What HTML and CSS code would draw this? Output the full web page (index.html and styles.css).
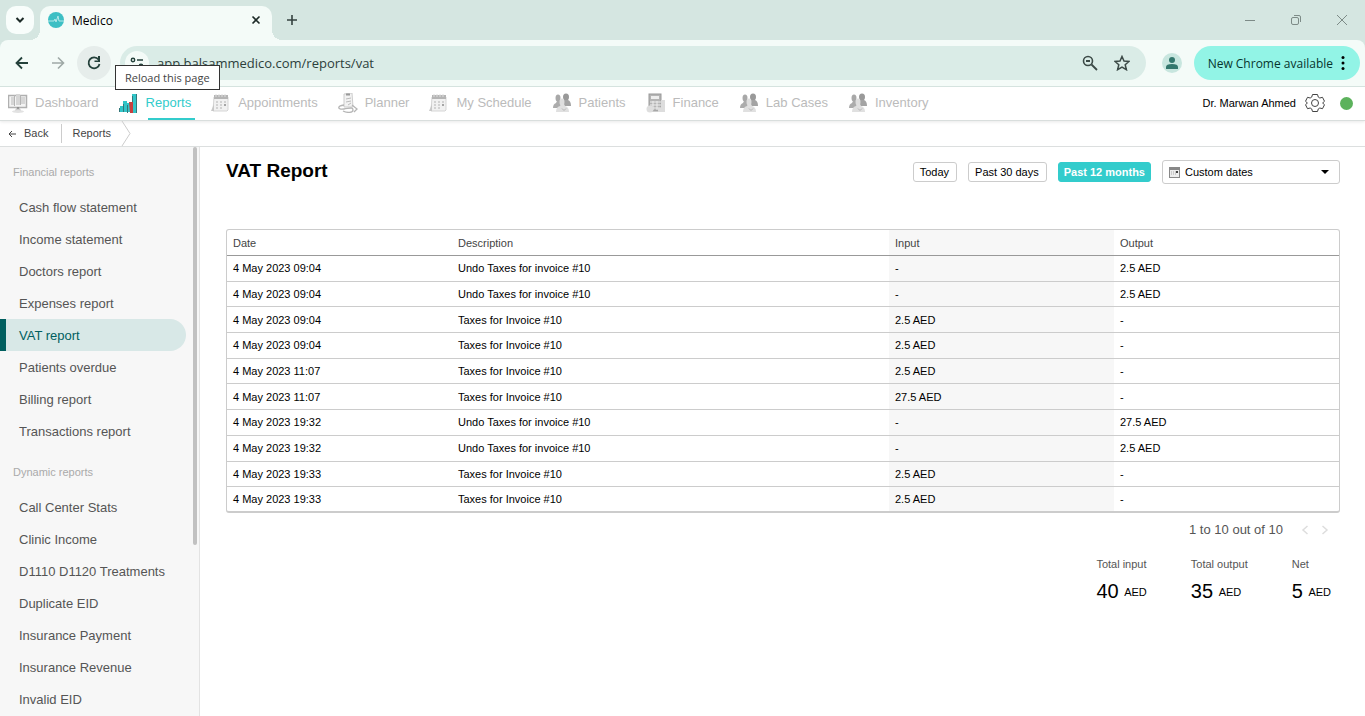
FILE: index.html
```html
<!doctype html>
<html lang="en">
<head>
    <meta charset="UTF-8">
    <title>Medico</title>
    <link rel="stylesheet" href="styles.css">
</head>

<body>
<svg class="defs" width="0" height="0">
    <symbol id="people" viewBox="0 0 20 20">
        <ellipse cx="6" cy="5" rx="2.500" ry="3.500" fill="#a8a8a8"/>
        <ellipse cx="14" cy="4" rx="3" ry="3.500" fill="#999"/>
        <path d="M1 15q0-4 3-5l1-2h3l3 7z" fill="#acacac"/>
        <path d="M9 13l3-6h4q3 1 3 6z" fill="#a4a4a4"/>
        <ellipse cx="10" cy="9" rx="2.500" ry="3.500" fill="#dedede"/>
        <path d="M4 19q0-5 4-6l1-2h3l1 2q4 1 4 6z" fill="#e0e0e0"/>
        <path d="M10 15.500l2 2 2-2" fill="none" stroke="#b5b5b5"/>
    </symbol>
    <symbol id="calendar" viewBox="0 0 20 20">
        <path d="M3 4h14v13l-1 1H2z" fill="#f1f1f1" stroke="#d5d5d5"/>
        <path d="M3 2h14v4H3z" fill="#b5b5b5"/>
        <path d="M5 1v3M8 1v3M11 1v3M14 1v3" stroke="#dedede"/>
        <path d="M5 9h2M9 9h2M13 9h2M5 12h2M9 12h2M5 15h2M9 15h2" stroke="#d2d2d2" stroke-width="2"/>
        <path d="M13 11h2v2h-2z" fill="#a5a5a5"/>
        <path d="M0 18l3-7v7z" fill="#c8c8c8"/>
    </symbol>
</svg>

<div class="tabs">
    <button class="search" aria-label="Search tabs"><svg width="10" height="10" viewBox="0 0 10 10"><path d="M1.500 3L5 6.500 8.500 3" fill="none" stroke="#1d2b28" stroke-width="2"/></svg></button>
    <div class="tab">
        <svg class="favicon" width="16" height="16" viewBox="0 0 16 16"><circle cx="8" cy="8" r="8" fill="#3dbfc4"/><path d="M0 9h6l1-2 1 3 2-6 1 5h5" fill="none" stroke="#b5e8e9"/></svg>
        <span>Medico</span>
        <button class="close" aria-label="Close tab"><svg width="10" height="10" viewBox="0 0 10 10"><path d="M1.500 1.500l7 7M8.500 1.500l-7 7" stroke="#1d2b28" stroke-width="1.600"/></svg></button>
    </div>
    <button class="new" aria-label="New tab"><svg width="12" height="12" viewBox="0 0 12 12"><path d="M6 1v10M1 6h10" stroke="#34423f" stroke-width="1.600"/></svg></button>
    <div class="window">
        <button aria-label="Minimize"><svg width="12" height="12" viewBox="0 0 12 12"><path d="M1 6.500h10" stroke="#7d8b87"/></svg></button>
        <button aria-label="Restore"><svg width="12" height="12" viewBox="0 0 12 12"><rect x="1.500" y="3.500" width="7" height="7" rx="1.500" fill="none" stroke="#7d8b87"/><path d="M4 1.500h5q1.500 0 1.500 1.500v5" fill="none" stroke="#7d8b87"/></svg></button>
        <button aria-label="Close"><svg width="12" height="12" viewBox="0 0 12 12"><path d="M1 1l10 10M11 1L1 11" stroke="#7d8b87"/></svg></button>
    </div>
</div>

<div class="toolbar">
    <button class="round" aria-label="Back"><svg width="14" height="14" viewBox="0 0 14 14"><path d="M13 7H2M7 1.500L1.500 7 7 12.500" fill="none" stroke="#24413b" stroke-width="1.800"/></svg></button>
    <button class="round" aria-label="Forward"><svg width="14" height="14" viewBox="0 0 14 14"><path d="M1 7h11M7 1.500L12.500 7 7 12.500" fill="none" stroke="#9ea9a6" stroke-width="1.600"/></svg></button>
    <button class="round reload" aria-label="Reload"><svg width="14" height="14" viewBox="0 0 14 14"><path d="M11.500 3.500A5.500 5.500 0 1 0 12.500 8" fill="none" stroke="#24413b" stroke-width="1.800"/><path d="M13 0v6H7.500V4.500h3.500V0z" fill="#24413b"/></svg></button>
    <div class="tip">Reload this page</div>
    <div class="address">
        <button class="site" aria-label="Site information"><svg width="14" height="14" viewBox="0 0 14 14"><circle cx="3" cy="4" r="1.700" fill="none" stroke="#24413b" stroke-width="1.400"/><path d="M7 4h6M1 10h6" stroke="#24413b" stroke-width="1.600"/><circle cx="11" cy="10" r="1.700" fill="none" stroke="#24413b" stroke-width="1.400"/></svg></button>
        <input type="text" class="url" aria-label="Address" value="app.balsammedico.com/reports/vat">
        <button aria-label="Zoom"><svg width="16" height="16" viewBox="0 0 16 16"><circle cx="6" cy="6" r="4.500" fill="none" stroke="#3c4a47" stroke-width="1.600"/><path d="M4 6h4M9.500 9.500L15 15" stroke="#3c4a47" stroke-width="1.800"/></svg></button>
        <button aria-label="Bookmark"><svg width="16" height="16" viewBox="0 0 16 16"><path d="M8 1.500l2 4.600 5 .4-3.800 3.300 1.200 4.900L8 12.100l-4.400 2.600 1.200-4.900L1 6.500l5-.4z" fill="none" stroke="#3c4a47" stroke-width="1.500"/></svg></button>
    </div>
    <button class="profile" aria-label="Profile"><svg width="14" height="14" viewBox="0 0 14 14"><circle cx="7" cy="4" r="3" fill="#33776d"/><path d="M1 13v-2q0-3 6-3t6 3v2z" fill="#33776d"/></svg></button>
    <button class="update">New Chrome available<svg width="4" height="16" viewBox="0 0 4 16"><circle cx="2" cy="2.500" r="1.500"/><circle cx="2" cy="8" r="1.500"/><circle cx="2" cy="13.500" r="1.500"/></svg></button>
</div>

<nav class="menu">
    <a href="#"><svg viewBox="0 0 20 20"><rect x=".5" y="2.500" width="18" height="12" fill="#f4f4f4" stroke="#b0b0b0" stroke-width="1.500"/><path d="M3 4h4v8H3zM8 1h4v11H8zM13 4h4v7h-4z" fill="#d6d6d6"/><path d="M6 2h1v11H6zM12 2h1v10h-1z" fill="#b5b5b5"/><path d="M8 15h4l1 3H7z" fill="#ccc"/><circle cx="10" cy="15" r="1" fill="#888"/><ellipse cx="10" cy="18.500" rx="6" ry="1.500" fill="#e2e2e2"/></svg>Dashboard</a>
    <a href="#" class="on"><svg viewBox="0 0 20 20"><path d="M1 13h4v6H1zM4 8h4v11H4zM8 10h4v9H8zM13 1h5v19h-5z" fill="#32c5c8"/><path d="M10 9h4v11h-3z" fill="#c7403f"/><path d="M0 15h1v4H0zM4 11h1v8H4zM8 12h1v8H8zM13 3h1v6h-1zM17 1h1v19h-1z" fill="#35777a"/></svg>Reports</a>
    <a href="#"><svg viewBox="0 0 20 20"><use href="#calendar"/></svg>Appointments</a>
    <a href="#"><svg viewBox="0 0 20 20"><path d="M6 1l8-1 1 14H6z" fill="#f2f2f2" stroke="#ccc"/><path d="M8 1.500h4" stroke="#999" stroke-width="2"/><path d="M8 6l5-1M8 9l5-1M10 12l3-2" stroke="#bbb"/><path d="M6 12c-7 1-7 5 0 4s9-2 9 1-6 3-10 1M14 12l5 4-3 3" fill="none" stroke="#b5b5b5" stroke-width="1.300"/></svg>Planner</a>
    <a href="#"><svg viewBox="0 0 20 20"><use href="#calendar"/></svg>My Schedule</a>
    <a href="#"><svg viewBox="0 0 20 20"><use href="#people"/></svg>Patients</a>
    <a href="#"><svg viewBox="0 0 20 20"><rect x="3" y="1" width="12" height="17" fill="#b5b5b5" stroke="#999"/><path d="M5 3h8v3H5z" fill="#eee"/><path d="M4 9h11M4 12h11M4 15h11M7 8v9M11 8v9" stroke="#eee"/><circle cx="4" cy="16" r="3.500" fill="#dedede"/><path d="M12 15h7v4h-7zM15 7h4v8h-4z" fill="#ddd"/></svg>Finance</a>
    <a href="#"><svg viewBox="0 0 20 20"><use href="#people"/></svg>Lab Cases</a>
    <a href="#"><svg viewBox="0 0 20 20"><use href="#people"/></svg>Inventory</a>
    <div class="user">
        <span>Dr. Marwan Ahmed</span>
        <button aria-label="Settings"><svg width="20" height="20" viewBox="0 0 20 20"><path d="M7.500 1.500h5l.8 2.600 1.500.9 2.700-.7 2 4-1.900 1.700 1.900 1.700-2 4-2.700-.7-1.500.9-.8 2.600h-5l-.8-2.600-1.500-.9-2.700.7-2-4L2.400 10 .5 8.300l2-4 2.700.7 1.500-.9z" fill="none" stroke="#444"/><circle cx="10" cy="10" r="3.500" fill="none" stroke="#444"/></svg></button>
        <i class="status"></i>
    </div>
</nav>

<div class="crumbs">
    <a href="#" class="back"><svg width="8" height="8" viewBox="0 0 8 8"><path d="M8 4H1M4 1L1 4l3 3" fill="none" stroke="#444"/></svg>Back</a>
    <a href="#" class="here">Reports</a>
    <svg class="arrow" width="10" height="25" viewBox="0 0 10 25"><path d="M1 0l8 12.500L1 25" fill="none" stroke="#ccc"/></svg>
</div>

<div class="page">
    <aside class="side">
        <h2>Financial reports</h2>
        <a href="#">Cash flow statement</a>
        <a href="#">Income statement</a>
        <a href="#">Doctors report</a>
        <a href="#">Expenses report</a>
        <a href="#" class="on">VAT report</a>
        <a href="#">Patients overdue</a>
        <a href="#">Billing report</a>
        <a href="#">Transactions report</a>
        <h2>Dynamic reports</h2>
        <a href="#">Call Center Stats</a>
        <a href="#">Clinic Income</a>
        <a href="#">D1110 D1120 Treatments</a>
        <a href="#">Duplicate EID</a>
        <a href="#">Insurance Payment</a>
        <a href="#">Insurance Revenue</a>
        <a href="#">Invalid EID</a>
        <div class="thumb"></div>
    </aside>
    <main>
        <div class="head">
            <h1>VAT Report</h1>
            <button>Today</button>
            <button>Past 30 days</button>
            <button class="on">Past 12 months</button>
            <div class="dates">
                <svg class="cal" width="11" height="11" viewBox="0 0 11 11"><rect x=".5" y=".5" width="10" height="10" fill="#eee" stroke="#888"/><path d="M1 2h9" stroke="#888" stroke-width="2"/><path d="M2 5h1M4 5h1M6 5h1M2 7h1M4 7h1M6 7h1" stroke="#aaa"/><path d="M7 5h2" stroke="#444" stroke-width="2"/></svg>
                <select aria-label="Dates"><option>Custom dates</option></select>
                <svg class="caret" width="8" height="4" viewBox="0 0 8 4"><path d="M0 0h8L4 4z"/></svg>
            </div>
        </div>
        <table>
            <colgroup><col class="c"><col><col class="c"><col class="c"></colgroup>
            <thead>
                <tr><th>Date</th><th>Description</th><th>Input</th><th>Output</th></tr>
            </thead>
            <tbody>
                <tr><td>4 May 2023 09:04</td><td>Undo Taxes for invoice #10</td><td>-</td><td>2.5 AED</td></tr>
                <tr><td>4 May 2023 09:04</td><td>Undo Taxes for invoice #10</td><td>-</td><td>2.5 AED</td></tr>
                <tr><td>4 May 2023 09:04</td><td>Taxes for Invoice #10</td><td>2.5 AED</td><td>-</td></tr>
                <tr><td>4 May 2023 09:04</td><td>Taxes for Invoice #10</td><td>2.5 AED</td><td>-</td></tr>
                <tr><td>4 May 2023 11:07</td><td>Taxes for Invoice #10</td><td>2.5 AED</td><td>-</td></tr>
                <tr><td>4 May 2023 11:07</td><td>Taxes for Invoice #10</td><td>27.5 AED</td><td>-</td></tr>
                <tr><td>4 May 2023 19:32</td><td>Undo Taxes for invoice #10</td><td>-</td><td>27.5 AED</td></tr>
                <tr><td>4 May 2023 19:32</td><td>Undo Taxes for invoice #10</td><td>-</td><td>2.5 AED</td></tr>
                <tr><td>4 May 2023 19:33</td><td>Taxes for Invoice #10</td><td>2.5 AED</td><td>-</td></tr>
                <tr><td>4 May 2023 19:33</td><td>Taxes for Invoice #10</td><td>2.5 AED</td><td>-</td></tr>
            </tbody>
        </table>
        <div class="pager">
            <span>1 to 10 out of 10</span>
            <button aria-label="Previous page" disabled><svg width="8" height="10" viewBox="0 0 8 10"><path d="M6.500 1L2 5l4.500 4" fill="none" stroke="#ddd" stroke-width="1.500"/></svg></button>
            <button aria-label="Next page" disabled><svg width="8" height="10" viewBox="0 0 8 10"><path d="M1.500 1L6 5 1.500 9" fill="none" stroke="#ddd" stroke-width="1.500"/></svg></button>
        </div>
        <dl class="total">
            <div><dt>Total input</dt><dd>40 <small>AED</small></dd></div>
            <div><dt>Total output</dt><dd>35 <small>AED</small></dd></div>
            <div><dt>Net</dt><dd>5 <small>AED</small></dd></div>
        </dl>
    </main>
</div>
</body>
</html>
```
FILE: styles.css
```css
*{
    margin: 0;
    padding: 0;
    box-sizing: border-box;
}
html{
    height: 100%;
}
body{
    display: flex;
    flex-direction: column;
    height: 100%;
    overflow: hidden;
    /* green strip shows behind the rounded toolbar corners */
    background: linear-gradient(#d5e6e1 48px, #fff 48px);
    font-family: "Liberation Sans", Arial, sans-serif;
    font-size: 11px;
    color: #000;
}
a{
    color: inherit;
    text-decoration: none;
}
button,input,select{
    border: none;
    outline: none;
    background: none;
    font: inherit;
    color: inherit;
}
svg{
    display: block;
    flex: none;
}
.defs{
    position: absolute;
}

/* browser */
.tabs,.toolbar{
    position: relative;
    display: flex;
    flex: none;
    align-items: center;
    font-family: "Open Sans", "Noto Sans", sans-serif;
    font-size: 12px;
}
.tabs{
    height: 40px;
    padding-left: 6px;
}
.tabs button,.toolbar button{
    display: flex;
    align-items: center;
    justify-content: center;
}
.tabs .search{
    width: 28px;
    height: 28px;
    margin-right: 6px;
    border-radius: 10px;
    background: #f8fdfb;
}
.tab{
    position: relative;
    display: flex;
    align-items: center;
    align-self: flex-end;
    width: 232px;
    height: 34px;
    padding: 0 8px 6px;
    border-radius: 10px 10px 0 0;
    background: #f4fbf8;
}
.tab:before,.tab:after{
    content: "";
    position: absolute;
    bottom: 0;
    width: 10px;
    height: 10px;
}
.tab:before{
    left: -10px;
    background: radial-gradient(circle at 0 0, transparent 10px, #f4fbf8 10px);
}
.tab:after{
    right: -10px;
    background: radial-gradient(circle at 100% 0, transparent 10px, #f4fbf8 10px);
}
.tab span{
    flex: 1;
    padding-left: 8px;
}
.tab .close{
    width: 16px;
    height: 16px;
}
.tabs .new{
    width: 28px;
    height: 28px;
    margin-left: 6px;
}
.window{
    display: flex;
    margin-left: auto;
}
.window button{
    width: 46px;
    height: 40px;
}
.toolbar{
    height: 47px;
    padding: 0 5px;
    border-bottom: 1px solid #d5e3df;
    border-radius: 8px 8px 0 0;
    background: #f4fbf8;
}
.round{
    width: 34px;
    height: 34px;
    margin-right: 2px;
    border-radius: 50%;
}
.reload{
    margin-right: 9px;
    background: #e6edeb;
}
.tip{
    position: absolute;
    left: 115px;
    top: 25px;
    z-index: 2;
    padding: 0 9px;
    border: 1px solid #333;
    background: #fff;
    font-size: 11px;
    line-height: 23px;
    color: #444;
}
.address{
    display: flex;
    flex: 1;
    align-items: center;
    height: 34px;
    padding: 0 8px 0 5px;
    border-radius: 17px;
    background: #daece7;
}
.address button{
    width: 32px;
    height: 32px;
}
.address .site{
    width: 24px;
    height: 24px;
    border-radius: 50%;
    background: #f4fbf8;
}
.url{
    flex: 1;
    padding-left: 8px;
    font-size: 13px;
    color: #2c403b;
}
.profile{
    width: 20px;
    height: 20px;
    margin: 0 12px 0 16px;
    border-radius: 50%;
    background: #c8e6df;
}
.update{
    gap: 8px;
    height: 34px;
    padding: 0 15px 0 14px;
    border-radius: 17px;
    background: #92f4e6;
    color: #06352e;
}

/* top menu */
.menu{
    display: flex;
    flex: none;
    align-items: center;
    gap: 20px;
    height: 34px;
    padding: 0 12px 0 8px;
    border-bottom: 1px solid #d9dedd;
    box-shadow: 0 1px 3px #e8e8e8;
    background: #fff;
    font-size: 13px;
    color: #bbb;
}
.menu a{
    position: relative;
    display: flex;
    align-items: center;
    gap: 7px;
    height: 33px;
    padding-bottom: 2px;
}
.menu a svg{
    width: 20px;
    height: 20px;
}
.menu .on{
    color: #3cc;
}
.menu .on:after{
    content: "";
    position: absolute;
    left: 29px;
    right: -4px;
    bottom: 0;
    height: 2px;
    background: #3cc;
}
.user{
    display: flex;
    align-items: center;
    gap: 9px;
    margin-left: auto;
    padding-bottom: 1px;
    font-size: 11px;
    color: #000;
}
.status{
    width: 13px;
    height: 13px;
    margin-left: 6px;
    border-radius: 50%;
    background: #5cb25c;
}
.crumbs{
    display: flex;
    flex: none;
    align-items: center;
    height: 26px;
    padding-left: 8px;
    border-bottom: 1px solid #dcdfdf;
    color: #444;
}
.crumbs a{
    line-height: 19px;
}
.back{
    display: flex;
    align-items: center;
    gap: 8px;
    padding-right: 13px;
    border-right: 1px solid #ccc;
}
.here{
    padding: 0 10px;
}

/* reports list */
.page{
    display: flex;
    flex: 1;
    min-height: 0;
}
.side{
    position: relative;
    flex: none;
    width: 200px;
    overflow: hidden;
    border-right: 1px solid #e3e3e3;
    background: #f7f7f7;
    font-size: 13px;
    color: #555;
}
.side h2{
    padding: 17px 13px 11px;
    font-size: 11px;
    font-weight: 400;
    line-height: 16px;
    color: #aaa;
}
.side a{
    display: block;
    margin-right: 13px;
    padding: 2px 0 0 19px;
    line-height: 30px;
}
.side .on{
    padding-left: 13px;
    border-left: 6px solid #005f5f;
    border-radius: 0 16px 16px 0;
    background: #d8e8e7;
    color: #005f5f;
}
.thumb{
    position: absolute;
    top: 0;
    right: 2px;
    width: 4px;
    height: 70%;
    border-radius: 2px;
    background: #c1c1c1;
}

/* report */
main{
    flex: 1;
    padding: 11px 25px 0 26px;
}
.head{
    display: flex;
    align-items: center;
    gap: 11px;
    height: 28px;
    margin-bottom: 43px;
}
h1{
    flex: 1;
    padding-bottom: 2px;
    font-size: 19px;
    line-height: 24px;
}
.head button{
    height: 20px;
    padding: 0 7px 0 6px;
    border: 1px solid #ccc;
    border-radius: 3px;
}
.head .on{
    padding: 0 5px;
    border-color: #3cc;
    background: #3cc;
    font-weight: 700;
    color: #fff;
}
.dates{
    position: relative;
    width: 178px;
}
.dates select{
    display: block;
    width: 100%;
    height: 24px;
    padding-left: 22px;
    border: 1px solid #ccc;
    border-radius: 3px;
    appearance: none;
}
.cal,.caret{
    position: absolute;
    left: 7px;
    top: 7px;
}
.caret{
    left: auto;
    right: 11px;
    top: 10px;
}
table{
    width: 100%;
    height: 284px;
    table-layout: fixed;
    border: 1px solid #ccc;
    border-bottom-width: 2px;
    border-radius: 3px;
    border-spacing: 0;
}
.c{
    width: 225px;
}
th{
    height: 26px;
    border-bottom: 1px solid #999;
    font-weight: 400;
    color: #444;
}
th,td{
    padding: 0 6px;
    text-align: left;
}
td{
    border-bottom: 1px solid #ccc;
}
tr:last-child td{
    border-bottom: none;
}
th:nth-child(3),td:nth-child(3){
    background: #f7f7f7;
}
.pager{
    display: flex;
    align-items: center;
    justify-content: flex-end;
    gap: 12px;
    padding: 9px 11px 0 0;
    font-size: 13px;
    line-height: 16px;
    color: #555;
}
.pager span{
    padding-right: 6px;
}
.total{
    display: flex;
    justify-content: flex-end;
    gap: 44px;
    padding: 18px 9px 0 0;
}
dt{
    line-height: 16px;
    color: #555;
}
dd{
    padding-top: 7px;
    font-size: 20px;
    line-height: 24px;
}
dd small{
    font-size: 11px;
    vertical-align: 2px;
}
```
